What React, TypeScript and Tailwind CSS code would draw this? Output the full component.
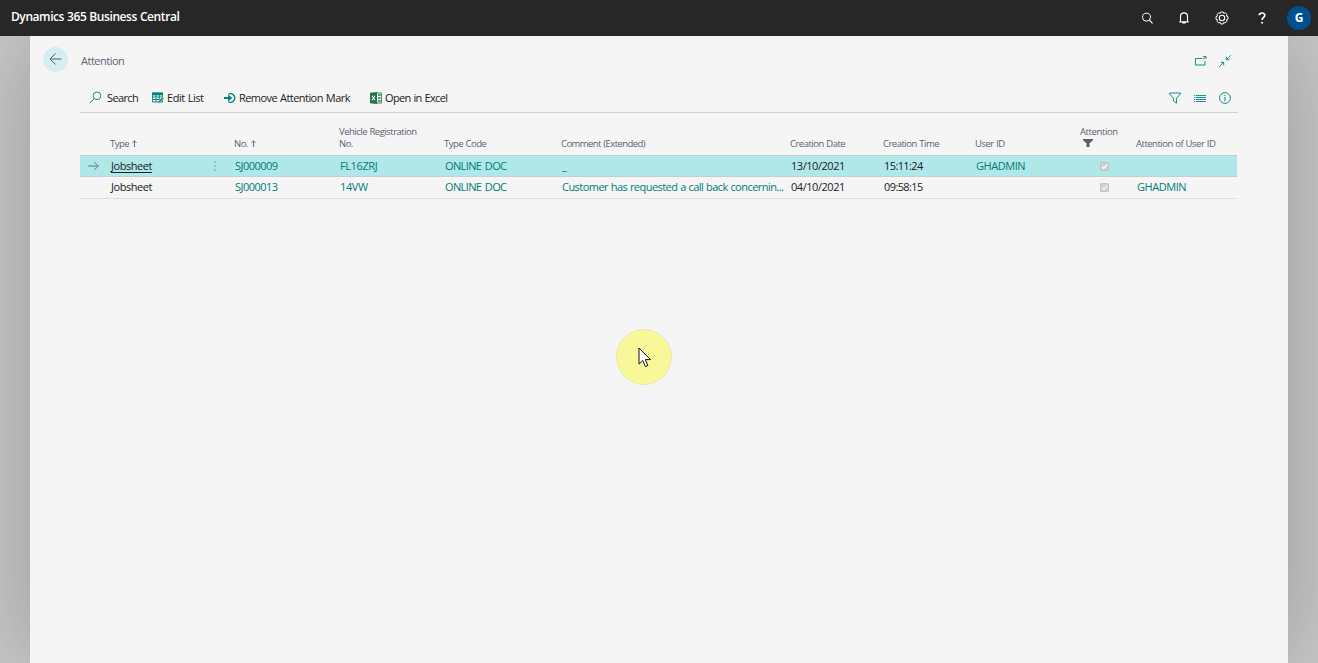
import type { ReactNode } from 'react';

function Ico({ children, w = 14, h = 14, className = '' }: { children: ReactNode; w?: number; h?: number; className?: string }) {
  return (
    <svg width={w} height={h} viewBox={`0 0 ${w} ${h}`} fill="none" stroke="currentColor" className={`block shrink-0 ${className}`}>
      {children}
    </svg>
  );
}

function TopBar() {
  return (
    <header className="flex h-9 items-start justify-between bg-[#272727] text-white">
      <div className="pl-[11px] pt-[8px] text-[12px] font-semibold leading-[18px] tracking-[-0.42px] [word-spacing:0.3px]">Dynamics 365 Business Central</div>
      <div className="flex h-9 items-center pr-[7px]">
        <Ico w={12} h={12} className="mr-[25px]">
          <circle cx="5.500" cy="5.200" r="4" strokeWidth="1" />
          <path d="M8.400 8.200l3.100 3.100" strokeWidth="1.200" />
        </Ico>
        <Ico w={12} h={14} className="mr-[25px]">
          <path d="M2.500 10.500V5.400a3.500 3.500 0 0 1 7 0v5.100M1.300 10.800h9.400M4.600 11.300a1.500 1.500 0 0 0 2.800 0" strokeWidth="1.200" />
        </Ico>
        <Ico w={14} h={14} className="mr-[29px]">
          <path d="M5.800 1h2.400l.5 1.400 1.500-.6 1.900 1.800-.8 1.400 1.700.7v2.500l-1.600.6.6 1.500-1.700 1.700-1.600-.6-.6 1.600H5.800l-.6-1.600-1.500.6L2 10.300l.6-1.500L1 8.200V5.700L2.600 5 2 3.500l1.700-1.700 1.500.6z" strokeWidth="1" />
          <circle cx="7" cy="7" r="2.700" strokeWidth="1.100" />
        </Ico>
        <Ico w={8} h={12} className="mr-[21px]">
          <path d="M1.200 3.300C1.300 1.700 2.500 1 4 1s2.800.8 2.800 2.300C6.800 5.300 4.100 5.600 4.100 8" strokeWidth="1.700" />
          <circle cx="4.100" cy="10.800" r="1.050" fill="currentColor" stroke="none" />
        </Ico>
        <div className="flex size-6 items-center justify-center rounded-full bg-[#00508f] text-[12px] font-bold">G</div>
      </div>
    </header>
  );
}

function TitleBar() {
  return (
    <div className="flex h-[47px] items-start pl-[13px] pr-[57px] pt-[11px]">
      <div className="flex size-[25px] items-center justify-center rounded-full bg-[#d6eeef] text-[#505c6d]">
        <Ico w={13} h={12} className="-mt-px">
          <path d="M12.500 6H1M6.500.6L1 6l5.500 5.400" strokeWidth="1" />
        </Ico>
      </div>
      <div className="ml-[13px] mt-[5px] text-[11px] leading-[18px] tracking-[-0.5px] text-[#5a6573]">Attention</div>
      <div className="ml-auto mt-[8px] flex gap-[12px] text-[#00847e]">
        <Ico w={13} h={12}>
          <path d="M8 3.500H1.500v6.500h9.500V6M8.800 4.500l2.900-2.700M9.300 1.500h2.700v2.500" strokeWidth=".9" />
        </Ico>
        <Ico w={12} h={12}>
          <path d="M11.700.3L7.300 4.700M7.300 1.700v3h3M.3 11.700l4.400-4.400M1.700 7.300h3v3" strokeWidth=".9" />
        </Ico>
      </div>
    </div>
  );
}

function Toolbar() {
  return (
    <div className="mx-[50px] flex h-[30px] items-center border-b border-[#d0d1d8] pl-[9px] pr-[7px] text-[11px] text-[#212121] [word-spacing:0.6px]">
      <Ico w={13} h={13} className="mr-[5px] text-[#00847e]">
        <circle cx="8" cy="4.800" r="3.800" strokeWidth=".9" />
        <path d="M5.200 7.600L.6 12.200" strokeWidth="1" />
      </Ico>
      <span className="mt-[2px] w-[45px] whitespace-nowrap tracking-[-0.62px]">Search</span>
      <Ico w={12} h={12} className="mr-[3px] text-[#00847e]">
        <path d="M.5 1h10v9H.5zM.5 5h10M.5 7.500h7M4 3v7M7.300 3v5" strokeWidth=".9" />
        <path d="M0 .6h11v2.700H0z" fill="currentColor" stroke="none" />
        <path d="M5.800 11.500l.6-2.200L10.300 5l1.400 1.300L8 10.800z" fill="currentColor" stroke="#f5f5f5" strokeWidth=".5" />
      </Ico>
      <span className="mt-[2px] w-[57px] whitespace-nowrap tracking-[-0.47px]">Edit List</span>
      <Ico w={12} h={12} className="mr-[3px] text-[#00847e]">
        <path d="M4.500 2.200A4.300 4.300 0 1 1 4.500 9.800" strokeWidth="1.400" />
        <path d="M0 5h4V2.400L8.300 6 4 9.600V7H0z" fill="currentColor" stroke="none" />
      </Ico>
      <span className="mt-[2px] w-[131px] whitespace-nowrap tracking-[-0.55px]">Remove Attention Mark</span>
      <Ico w={12} h={12} className="mr-[3px]">
        <path d="M6 1h5.400v10H6" stroke="#217346" fill="#fff" strokeWidth=".9" />
        <path d="M8 3h2.600M8 6h2.600M8 9h2.600" stroke="#217346" strokeWidth="1.400" />
        <path d="M0 .8L7 0v12l-7-.8z" fill="#217346" stroke="none" />
        <path d="M2 3.700l3 4.600M5 3.700L2 8.300" stroke="#fff" strokeWidth="1.100" />
      </Ico>
      <span className="mt-[2px] whitespace-nowrap tracking-[-0.65px]">Open in Excel</span>
      <div className="ml-auto flex items-center gap-[13px] text-[#00847e]">
        <Ico w={12} h={12}>
          <path d="M.6 1h10.800v1L7.500 6.200v5L4.500 9V6.200L.6 2z" strokeWidth=".9" />
        </Ico>
        <Ico w={12} h={12}>
          <path d="M0 3.500h1.300M2 3.500h10M0 5.500h1.300M2 5.500h10M0 7.500h1.300M2 7.500h10M0 9.500h1.300M2 9.500h10" strokeWidth=".9" />
        </Ico>
        <Ico w={12} h={12}>
          <circle cx="6" cy="6" r="5.400" strokeWidth=".9" />
          <path d="M6 5v4M6 3v1.100" strokeWidth="1" />
        </Ico>
      </div>
    </div>
  );
}

const GRID = 'grid grid-cols-[30px_124px_105px_105px_117px_229px_93px_92px_105px_56px_101px]';

function Check() {
  return (
    <Ico w={9} h={9} className="ml-[20px]">
      <rect x=".5" y=".5" width="8" height="8" rx=".5" fill="#cfd0d1" stroke="#c2c5c7" />
      <path d="M2 4.700l1.800 1.700L7.200 2.700" stroke="#fff" strokeWidth="1.100" />
    </Ico>
  );
}

function UpArrow() {
  return (
    <Ico w={5} h={7} className="mb-[3px] ml-[3px]">
      <path d="M2.500 7V.8M.4 2.900L2.500.8l2.100 2.100" strokeWidth=".9" />
    </Ico>
  );
}

interface Entry {
  no: string;
  reg: string;
  comment: string;
  date: string;
  time: string;
  user: string;
  attentionOf: string;
  selected?: boolean;
}

const entries: Entry[] = [
  { no: 'SJ000009', reg: 'FL16ZRJ', comment: '_', date: '13/10/2021', time: '15:11:24', user: 'GHADMIN', attentionOf: '', selected: true },
  { no: 'SJ000013', reg: '14VW', comment: 'Customer has requested a call back concernin...', date: '04/10/2021', time: '09:58:15', user: '', attentionOf: 'GHADMIN' },
];

function Row({ e }: { e: Entry }) {
  return (
    <div className={`${GRID} items-center whitespace-nowrap text-[11px] leading-[20px] text-[#007d77] ${e.selected ? 'h-[22px] border-y border-[#c3cfd2] bg-[#b0e8ea]' : 'h-[22px] border-b border-[#e0e1e3] pb-px'}`}>
      <div className="pl-[8px] text-[#50707a]">
        {e.selected && (
          <Ico w={11} h={10}>
            <path d="M0 5h10.300M6.300 1l4 4-4 4" strokeWidth=".9" />
          </Ico>
        )}
      </div>
      <div className="flex items-center justify-between pl-[1px] pr-[18px] text-[#212121]">
        <span className={`tracking-[-0.45px] ${e.selected ? 'underline underline-offset-2' : ''}`}>Jobsheet</span>
        {e.selected && (
          <Ico w={2} h={12} className="text-[#3d6268]">
            <path d="M.3 2h1.200M.3 6h1.200M.3 10h1.200" strokeWidth="1.200" />
          </Ico>
        )}
      </div>
      <div className="pl-[1px] tracking-[-0.52px]">{e.no}</div>
      <div className="pl-[1px] tracking-[-0.4px]">{e.reg}</div>
      <div className="pl-[1px] tracking-[-0.62px] [word-spacing:1.2px]">ONLINE DOC</div>
      <div className="pl-px tracking-[-0.54px] [word-spacing:0.4px]">{e.comment}</div>
      <div className="pl-[1px] tracking-[-0.45px] text-[#212121]">{e.date}</div>
      <div className="pl-[1px] tracking-[-0.6px] text-[#212121]">{e.time}</div>
      <div className="pl-[1px] tracking-[-0.45px]">{e.user}</div>
      <div><Check /></div>
      <div className="pl-px tracking-[-0.45px]">{e.attentionOf}</div>
    </div>
  );
}

function Table() {
  return (
    <div className="ml-[50px] w-[1157px]">
      <div className={`${GRID} h-[42px] items-end whitespace-nowrap pb-[5px] text-[9.5px] leading-[12px] tracking-[-0.5px] text-[#5a6370] [word-spacing:0.5px]`}>
        <div />
        <div className="flex items-end">Type<UpArrow /></div>
        <div className="flex items-end">No.<UpArrow /></div>
        <div>Vehicle Registration<br />No.</div>
        <div>Type Code</div>
        <div className="tracking-[-0.56px]">Comment (Extended)</div>
        <div>Creation Date</div>
        <div>Creation Time</div>
        <div>User ID</div>
        <div className="tracking-[-0.4px]">
          Attention
          <Ico w={10} h={8} className="mb-[3px] ml-[3px] mt-px">
            <path d="M0 0h10v1L6.500 4.500V8h-3V4.500L0 1z" fill="#5c6066" stroke="none" />
          </Ico>
        </div>
        <div>Attention of User ID</div>
      </div>
      {entries.map((e) => (
        <Row key={e.no} e={e} />
      ))}
    </div>
  );
}

export default function App() {
  return (
    <div className="relative flex h-[663px] w-[1318px] flex-col overflow-hidden bg-[#c8c8c8] font-['Open_Sans','Noto_Sans',sans-serif]">
      <div className="z-10"><TopBar /></div>
      <main className="mx-[30px] h-[627px] bg-[#f5f5f5] shadow-[0_0_90px_rgba(0,0,0,0.24)]">
        <TitleBar />
        <Toolbar />
        <Table />
      </main>
      <div className="absolute left-[616px] top-[329px] z-20 size-14 rounded-full border border-[#e9e9b4] bg-[#f8f899]">
        <svg width="14" height="21" viewBox="0 0 14 21" className="ml-[21px] mt-[17px] block">
          <path d="M1 1v16.200l3.800-3.600 2.600 6 2.500-1.100-2.600-5.900h5.200z" fill="#fff" stroke="#111" strokeWidth="1" />
        </svg>
      </div>
    </div>
  );
}
